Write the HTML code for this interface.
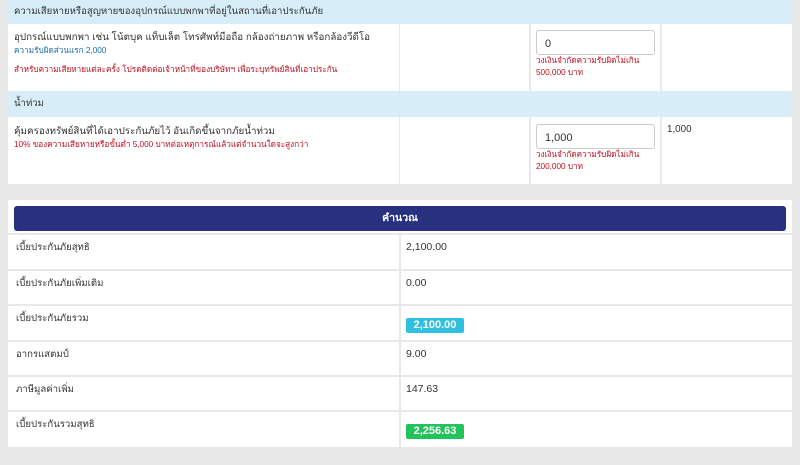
<!DOCTYPE html>
<html><head><meta charset="utf-8"><style>
*{box-sizing:border-box;margin:0;padding:0}
body{width:800px;height:465px;background:#e8e8e8;font-family:"Liberation Sans","Noto Sans CJK SC",sans-serif;color:#333;position:relative;overflow:hidden}
.abs{position:absolute;white-space:nowrap}
.hdr{background:#d7edf8;left:8px;width:784px;font-size:9.6px;padding-left:6px;line-height:24px}
.w{background:#fff}
.t{font-size:9.8px}
.s{font-size:8.2px}
.inp{border:1px solid #ccc;border-radius:3px;background:#fff;height:25px;font-size:11px;padding:7px 8px 0 8px;width:119px;left:536px}
.red{color:#c01020}
.blue{color:#1c6fb0}
.vl{background:#e8e8e8;width:2px}
.hl{background:#e8e8e8;height:2px;left:8px;width:784px}
.lab{left:16px;font-size:9.6px}
.val{left:406px;font-size:10.5px}
.badge{left:406px;width:58px;height:15px;border-radius:2px;color:#fff;font-weight:bold;font-size:11px;text-align:center;line-height:15px}
</style></head><body>
<div class="abs w" style="left:8px;top:0;width:784px;height:184px"></div>
<div class="abs hdr" style="top:0;height:24px">ความเสียหายหรือสูญหายของอุปกรณ์แบบพกพาที่อยู่ในสถานที่เอาประกันภัย</div>
<div class="abs hdr" style="top:91px;height:26px;line-height:26px">น้ำท่วม</div>
<div class="abs vl" style="left:529px;top:24px;height:67px"></div>
<div class="abs vl" style="left:660px;top:24px;height:67px"></div>
<div class="abs vl" style="left:399px;top:24px;height:67px;width:1px"></div>
<div class="abs vl" style="left:529px;top:117px;height:67px"></div>
<div class="abs vl" style="left:660px;top:117px;height:67px"></div>
<div class="abs vl" style="left:399px;top:117px;height:67px;width:1px"></div>
<div class="abs t" style="left:14px;top:30px">อุปกรณ์แบบพกพา เช่น โน้ตบุค แท็บเล็ต โทรศัพท์มือถือ กล้องถ่ายภาพ หรือกล้องวีดีโอ</div>
<div class="abs s blue" style="left:14px;top:44px">ความรับผิดส่วนแรก 2,000</div>
<div class="abs s red" style="left:14px;top:63px">สำหรับความเสียหายแต่ละครั้ง โปรดติดต่อเจ้าหน้าที่ของบริษัทฯ เพื่อระบุทรัพย์สินที่เอาประกัน</div>
<div class="abs inp" style="top:30px">0</div>
<div class="abs s red" style="left:536px;top:55px;line-height:12px">วงเงินจำกัดความรับผิดไม่เกิน<br>500,000 บาท</div>
<div class="abs t" style="left:14px;top:124px">คุ้มครองทรัพย์สินที่ได้เอาประกันภัยไว้ อันเกิดขึ้นจากภัยน้ำท่วม</div>
<div class="abs s red" style="left:14px;top:138px">10% ของความเสียหายหรือขั้นต่ำ 5,000 บาทต่อเหตุการณ์แล้วแต่จำนวนใดจะสูงกว่า</div>
<div class="abs inp" style="top:124px">1,000</div>
<div class="abs s red" style="left:536px;top:149px;line-height:12px">วงเงินจำกัดความรับผิดไม่เกิน<br>200,000 บาท</div>
<div class="abs t" style="left:667px;top:124px">1,000</div>

<div class="abs w" style="left:8px;top:200px;width:784px;height:247px"></div>
<div class="abs" style="left:14px;top:206px;width:772px;height:25px;background:#283080;border-radius:3px;color:#fff;font-weight:bold;font-size:10.5px;text-align:center;line-height:25px">คำนวณ</div>
<div class="abs hl" style="top:233px"></div>
<div class="abs hl" style="top:269px"></div>
<div class="abs hl" style="top:304px"></div>
<div class="abs hl" style="top:340px"></div>
<div class="abs hl" style="top:375px"></div>
<div class="abs hl" style="top:410px"></div>
<div class="abs vl" style="left:399px;top:233px;height:214px"></div>
<div class="abs lab" style="top:240px">เบี้ยประกันภัยสุทธิ</div><div class="abs val" style="top:241px">2,100.00</div>
<div class="abs lab" style="top:276px">เบี้ยประกันภัยเพิ่มเติม</div><div class="abs val" style="top:277px">0.00</div>
<div class="abs lab" style="top:311px">เบี้ยประกันภัยรวม</div><div class="abs badge" style="top:318px;background:#2fc0df">2,100.00</div>
<div class="abs lab" style="top:347px">อากรแสตมป์</div><div class="abs val" style="top:348px">9.00</div>
<div class="abs lab" style="top:382px">ภาษีมูลค่าเพิ่ม</div><div class="abs val" style="top:383px">147.63</div>
<div class="abs lab" style="top:417px">เบี้ยประกันรวมสุทธิ</div><div class="abs badge" style="top:424px;background:#22c35a">2,256.63</div>
</body></html>
